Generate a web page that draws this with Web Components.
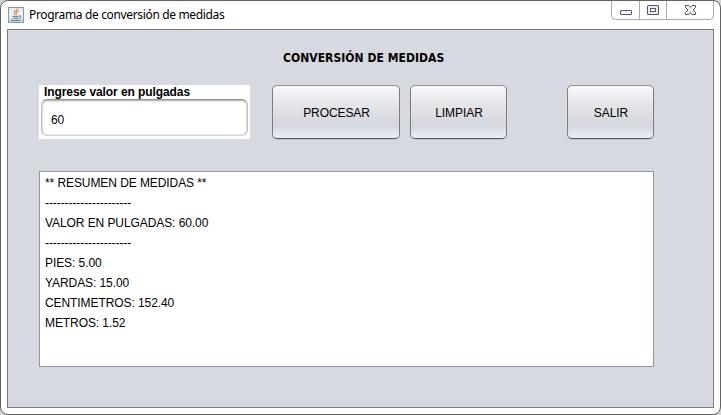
<!DOCTYPE html>
<html lang="es"><head><meta charset="utf-8"><title>Programa de conversión de medidas</title>
<style>html,body{margin:0;height:100%;overflow:hidden;background:#d2d4d2}</style></head><body>
<app-window>
  <title-bar slot="title">Programa de conversión de medidas</title-bar>
  <conversion-form></conversion-form>
</app-window>
<script>
const define = (name, html) => customElements.define(name, class extends HTMLElement {
  constructor() {
    super();
    const t = document.createElement('template');
    t.innerHTML = html;
    this.attachShadow({mode: 'open'}).append(t.content.cloneNode(true));
  }
});

define('app-window', `<style>
:host{display:flex;flex-direction:column;box-sizing:border-box;width:721px;height:415px;border:1px solid #626262;border-radius:8px;background:#fff;padding:0 6px 6px;font:12px "Liberation Sans",Arial,sans-serif;letter-spacing:-.08px;color:#000}
main{flex:1;box-sizing:border-box;border:1px solid #7c7c80;background:#d6d9e0}
</style><slot name="title"></slot><main><slot></slot></main>`);

define('java-icon', `<style>:host{display:block;width:16px;height:16px}svg{display:block}</style>
<svg width="16" height="16" viewBox="0 0 16 16" fill="none">
<defs><linearGradient id="g" x2="0" y2="1"><stop stop-color="#e3e9ee"/><stop offset=".5" stop-color="#f3f5f7"/><stop offset="1" stop-color="#c3d0dc"/></linearGradient></defs>
<rect x=".5" y=".5" width="15" height="15" fill="url(#g)" stroke="#8799ab"/>
<path d="M9.3 1.5C9.8 3.7 5.6 4.2 6.1 6c.3.8 1 1.2 1.3 2.1M10.8 4.1C8.6 4.8 7.7 5.5 8.3 6.5c.4.7.3 1.2-.3 1.8" stroke="#e6813c" stroke-width="1.1"/>
<path d="M4.5 9.2c1.6.6 4.8.6 6.3 0M5.2 11c1.5.6 4 .6 5.2 0M11.2 8.9c2.4-.5 2.2 1.6.3 2.1M3 12.8c1.5 1.2 8 1.1 9.7-.1" stroke="#4c7897"/>
</svg>`);

define('window-controls', `<style>
:host{display:block;width:103px;height:19px}svg{display:block}
</style><svg width="103" height="19" viewBox="0 0 103 19" fill="none">
<path d="M.5 0v14.5q0 4 4 4h94q4 0 4-4V0M28.5 0v18M55.5 0v18" stroke="#a9a9ad"/>
<rect x="9.5" y="9.5" width="11" height="4" rx=".5" fill="#f5f5f8" stroke="#55566d"/>
<rect x="36.5" y="4.5" width="11" height="9" rx=".5" fill="#ececf1" stroke="#55566d"/>
<rect x="39.5" y="7.5" width="5" height="3" fill="#fff" stroke="#55566d"/>
<path d="M74.5 4.5h3.4l1.6 1.9 1.6-1.9h3.4v2L82 9l2.5 2.5v2h-3.4l-1.6-1.9-1.6 1.9h-3.4v-2L77 9l-2.5-2.5z" fill="#f0f0f4" stroke="#55566d"/>
</svg>`);

define('title-bar', `<style>
:host{display:flex;height:28px;justify-content:space-between}
.name{display:flex;padding:6px 0 0 1px;gap:5px}
span{font:12px/16px "Noto Sans","Open Sans",sans-serif;letter-spacing:-.35px;white-space:nowrap}
</style><div class="name"><java-icon></java-icon><span><slot></slot></span></div><window-controls></window-controls>`);

define('value-field', `<style>
:host{display:flex;flex-direction:column;box-sizing:border-box;width:211px;height:54px;background:#fff;padding:0 2px 3px}
b{font-size:12px;line-height:14px;height:14px;padding-left:3px;white-space:nowrap}
div{flex:1;box-sizing:border-box;border:1px solid #bfbfbf;border-top-color:#909090;border-bottom-color:#d0d0d0;border-radius:6px;box-shadow:inset 0 1px 2px #aaa,inset 0 0 2px #ccc;padding:12px 9px 0;line-height:16px}
</style><b><slot name="label"></slot></b><div><slot></slot></div>`);

define('push-button', `<style>
:host{display:block;height:54px}
button{display:block;width:100%;height:100%;padding:2px 0 0 1px;font:inherit;letter-spacing:inherit;color:inherit;border:1px solid #707178;border-color:#929398 #7c7d83 #54555b;border-radius:5px;background:linear-gradient(#f7f8fa,#e5e6e9 35%,#d5d8de 70%,#d6d9e1 78%,#eceff7);box-shadow:0 1px #c3c6cd}
</style><button><slot></slot></button>`);

define('result-area', `<style>
:host{display:block;box-sizing:border-box;height:196px;border:1px solid #9297a1;background:#fff;padding:1px 5px;line-height:20px;white-space:pre}
</style><slot></slot>`);

define('conversion-form', `<style>
:host{display:block;padding:19px 59px 0 31px}
h1{margin:0;height:36px;font:bold 12px/18px "DejaVu Sans Condensed","DejaVu Sans",sans-serif;font-stretch:condensed;letter-spacing:.05px;padding-left:244px;white-space:nowrap}
.row{display:flex;height:54px;margin-bottom:32px}
.p{width:128px;margin-left:22px}.l{width:97px;margin-left:10px}.s{width:87px;margin-left:auto}
</style><h1>CONVERSIÓN DE MEDIDAS</h1>
<div class="row"><value-field><span slot="label">Ingrese valor en pulgadas</span>60</value-field>
<push-button class="p">PROCESAR</push-button><push-button class="l">LIMPIAR</push-button><push-button class="s">SALIR</push-button></div>
<result-area>** RESUMEN DE MEDIDAS **
----------------------
VALOR EN PULGADAS: 60.00
----------------------
PIES: 5.00
YARDAS: 15.00
CENTIMETROS: 152.40
METROS: 1.52</result-area>`);
</script></body></html>
